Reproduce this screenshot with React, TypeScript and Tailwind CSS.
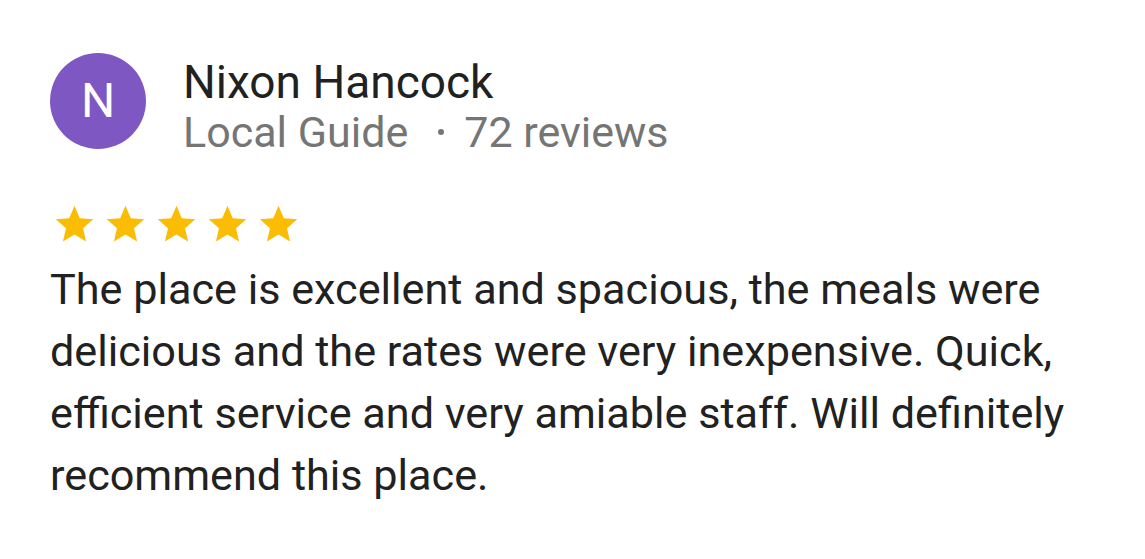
function StarIcon() {
  return (
    <svg viewBox="0 0 24 24" className="w-[45px] h-[45px] text-[#fbbc04]" fill="currentColor">
      <path d="M12 17.27L18.18 21l-1.64-7.03L22 9.24l-7.19-.61L12 2 9.19 8.63 2 9.24l5.46 4.73L5.82 21z" />
    </svg>
  );
}

export default function App() {
  return (
    <div className="w-[1145px] h-[559px] bg-white font-['Roboto',sans-serif] pl-[50px] pt-[53px]">
      <div className="flex items-start gap-[37px]">
        <div className="w-[96px] h-[96px] rounded-full bg-[#7e57c2] flex items-center justify-center text-white text-[48px] leading-none">
          N
        </div>
        <div className="flex flex-col pt-[2px]">
          <div className="text-[46px] leading-[54px] text-[#212121]">Nixon Hancock</div>
          <div className="text-[43px] leading-[46px] text-[#757575] flex items-center">
            <span>Local Guide</span>
            <span className="ml-[30px] mr-[20px] w-[6px] h-[6px] rounded-full bg-[#757575]" />
            <span>72 reviews</span>
          </div>
        </div>
      </div>
      <div className="flex gap-[6px] mt-[47px] ml-[2px]">
        {[0, 1, 2, 3, 4].map((i) => (
          <StarIcon key={i} />
        ))}
      </div>
      <p className="mt-[12px] w-[1075px] text-[43.2px] leading-[62px] text-[#212121]">
        The place is excellent and spacious, the meals were delicious and the rates were very
        inexpensive. Quick, efficient service and very amiable staff. Will definitely recommend
        this place.
      </p>
    </div>
  );
}
